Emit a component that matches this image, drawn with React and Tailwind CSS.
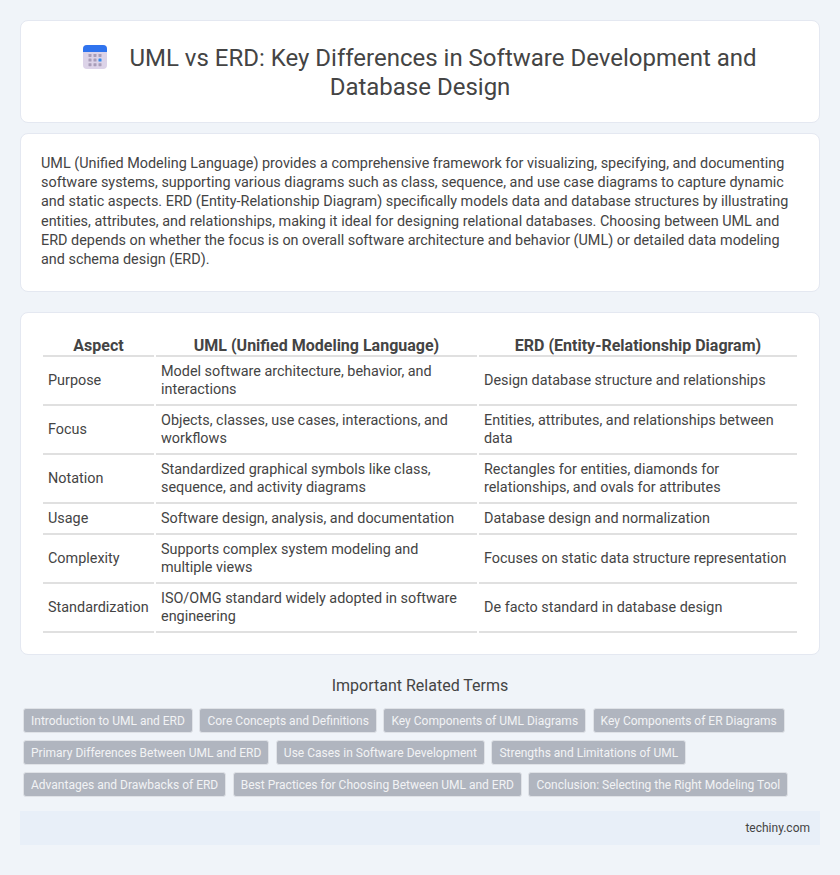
const rows = [
  ['Purpose', 'Model software architecture, behavior, and interactions', 'Design database structure and relationships'],
  ['Focus', 'Objects, classes, use cases, interactions, and workflows', 'Entities, attributes, and relationships between data'],
  ['Notation', 'Standardized graphical symbols like class, sequence, and activity diagrams', 'Rectangles for entities, diamonds for relationships, and ovals for attributes'],
  ['Usage', 'Software design, analysis, and documentation', 'Database design and normalization'],
  ['Complexity', 'Supports complex system modeling and multiple views', 'Focuses on static data structure representation'],
  ['Standardization', 'ISO/OMG standard widely adopted in software engineering', 'De facto standard in database design'],
]

const terms = [
  'Introduction to UML and ERD',
  'Core Concepts and Definitions',
  'Key Components of UML Diagrams',
  'Key Components of ER Diagrams',
  'Primary Differences Between UML and ERD',
  'Use Cases in Software Development',
  'Strengths and Limitations of UML',
  'Advantages and Drawbacks of ERD',
  'Best Practices for Choosing Between UML and ERD',
  'Conclusion: Selecting the Right Modeling Tool',
]

function CalendarIcon() {
  const cells = []
  for (let r = 0; r < 3; r++) {
    for (let c = 0; c < 3; c++) {
      const blue = r === 1 && c === 2
      cells.push(<rect key={r + '-' + c} x={5.5 + c * 5} y={9 + r * 4.6} width="3" height="3" rx="0.4" fill={blue ? '#2f8cf0' : '#a89db8'} />)
    }
  }
  return (
    <svg width="24" height="24" viewBox="0 0 24 24" className="inline-block align-[-3px] mr-[22px]">
      <rect x="0" y="0" width="24" height="24" rx="4" fill="#dcd3e8" />
      <path d="M0 7V4a4 4 0 0 1 4-4h16a4 4 0 0 1 4 4v3z" fill="#2f73ee" />
      {cells}
    </svg>
  )
}

export default function App() {
  return (
    <div className="min-h-[875px] bg-[#f0f4f9] px-5 pt-5 pb-[30px] font-['Roboto',sans-serif] text-[#444]">
      {/* Title */}
      <div className="bg-white rounded-lg border border-[#e4e8f1] h-[103px] pt-[23px] px-5">
        <h1 className="text-2xl leading-[29px] font-normal text-center text-[#444]">
          <CalendarIcon />
          UML vs ERD: Key Differences in Software Development and Database Design
        </h1>
      </div>

      {/* Intro */}
      <div className="mt-[10px] bg-white rounded-lg border border-[#e4e8f1] px-5 pt-[20px] pb-[21px] h-[159px]">
        <p className="text-[14.4px] leading-[19.2px] text-[#444]">
          UML (Unified Modeling Language) provides a comprehensive framework for visualizing, specifying, and documenting software systems, supporting various diagrams such as class, sequence, and use case diagrams to capture dynamic and static aspects. ERD (Entity-Relationship Diagram) specifically models data and database structures by illustrating entities, attributes, and relationships, making it ideal for designing relational databases. Choosing between UML and ERD depends on whether the focus is on overall software architecture and behavior (UML) or detailed data modeling and schema design (ERD).
        </p>
      </div>

      {/* Comparison table */}
      <div className="mt-[20px] bg-white rounded-lg border border-[#e4e8f1] px-5 pt-[20px] h-[343px]">
        <table className="w-full border-separate border-spacing-0.5 text-[14.4px] leading-[18px] text-[#444]">
          <thead>
            <tr>
              <th className="w-[111px] h-[22px] p-0 font-bold text-base leading-[19px] text-center border-b-2 border-[#e0e0e0]">Aspect</th>
              <th className="w-[321px] p-0 font-bold text-base leading-[19px] text-center border-b-2 border-[#e0e0e0]">UML (Unified Modeling Language)</th>
              <th className="p-0 font-bold text-base leading-[19px] text-center border-b-2 border-[#e0e0e0]">ERD (Entity-Relationship Diagram)</th>
            </tr>
          </thead>
          <tbody>
            {rows.map((row) => (
              <tr key={row[0]}>
                {row.map((cell) => (
                  <td key={cell} className="px-[5px] pt-1 pb-[5px] align-middle border-b-2 border-[#e0e0e0]">{cell}</td>
                ))}
              </tr>
            ))}
          </tbody>
        </table>
      </div>

      {/* Related terms */}
      <div className="mt-[21px] px-[3px]">
        <h2 className="text-base leading-[19px] font-normal text-center text-[#444]">Important Related Terms</h2>
        <div className="mt-[13px] flex flex-wrap gap-x-[6.5px] gap-y-[7px]">
          {terms.map((term) => (
            <span key={term} className="h-[25px] px-[7px] flex items-center bg-[#b0b5bf] border border-[#dfe2e7] rounded-[3px] text-xs text-[#f2f3f5]">
              {term}
            </span>
          ))}
        </div>
      </div>

      {/* Footer */}
      <div className="mt-[14px] h-[34px] bg-[#e8eff8] flex items-center justify-end px-[10px] text-xs text-[#444]">
        techiny.com
      </div>
    </div>
  )
}
